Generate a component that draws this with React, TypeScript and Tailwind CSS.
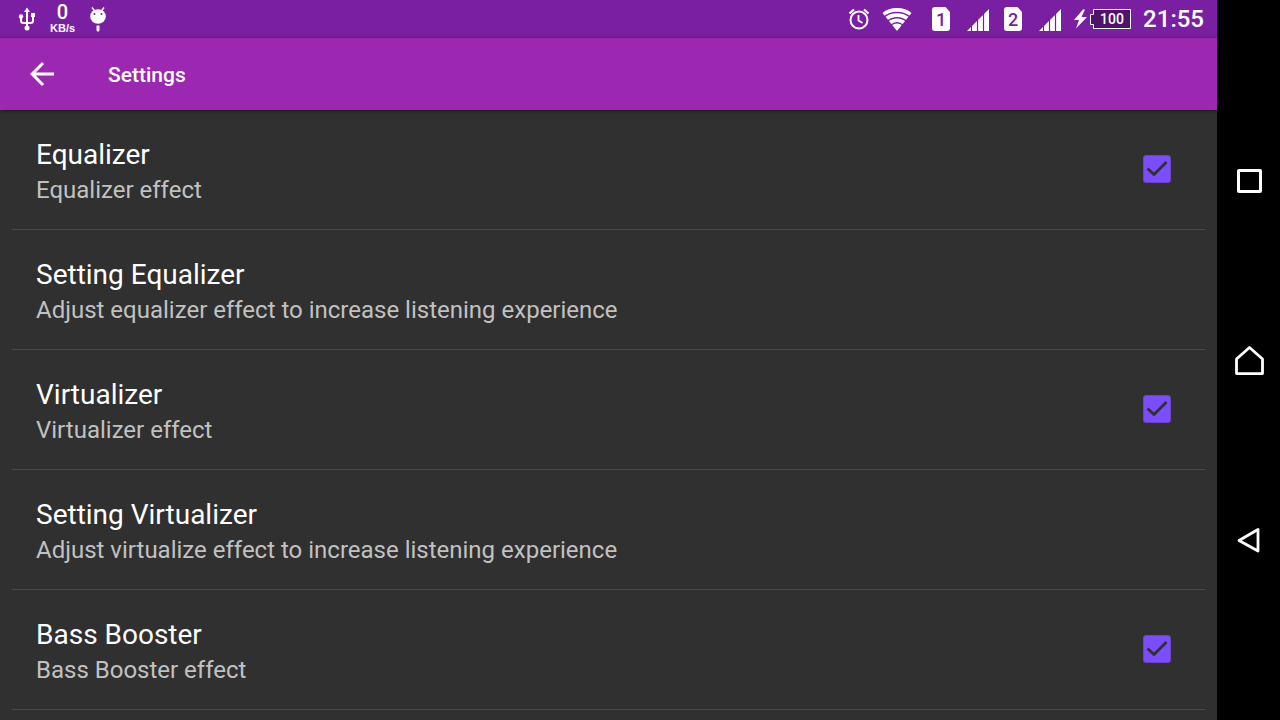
import { useState } from 'react';

interface Preference { id: string; title: string; summary: string; toggle?: boolean; }

const PREFERENCES: Preference[] = [
  { id: 'equalizer', title: 'Equalizer', summary: 'Equalizer effect', toggle: true },
  { id: 'setting-equalizer', title: 'Setting Equalizer', summary: 'Adjust equalizer effect to increase listening experience' },
  { id: 'virtualizer', title: 'Virtualizer', summary: 'Virtualizer effect', toggle: true },
  { id: 'setting-virtualizer', title: 'Setting Virtualizer', summary: 'Adjust virtualize effect to increase listening experience' },
  { id: 'bass-booster', title: 'Bass Booster', summary: 'Bass Booster effect', toggle: true },
];

function UsbIcon() {
  return (
    <svg width="18" height="24" viewBox="0 0 18 24" fill="none" stroke="white" strokeWidth="2">
      <path d="M9 4v17M3 10v3.500c0 1.500 1 2.500 2.500 2.500H12.500c1.500 0 2.500-1 2.500-2.500V9" />
      <path d="M9 0.500l3 4.500H6zM13 6h4v4h-4z" fill="white" stroke="none" />
      <circle cx="3" cy="9.500" r="2.200" fill="white" stroke="none" />
      <circle cx="9" cy="21" r="2.500" fill="white" stroke="none" />
    </svg>
  );
}

function AndroidHeadIcon() {
  return (
    <svg width="18" height="26" viewBox="0 0 18 26">
      <path d="M3 1.500l3 4M15 1.500l-3 4" stroke="white" strokeWidth="1.500" />
      <ellipse cx="9" cy="10.500" rx="7.800" ry="7.300" fill="white" />
      <path d="M7.500 19.500h3V24a1.500 1.500 0 0 1-3 0z" fill="white" />
      <circle cx="5.500" cy="8" r="1" fill="#7b1fa2" />
      <circle cx="12.500" cy="8" r="1" fill="#7b1fa2" />
    </svg>
  );
}

function AlarmIcon() {
  return (
    <svg width="22" height="22" viewBox="0 0 22 22" fill="none" stroke="white" strokeWidth="2">
      <circle cx="11" cy="12" r="8.500" />
      <path d="M10.500 7v5.500l4 2.500" strokeWidth="1.800" />
      <path d="M1.500 5.500l4.500-4M20.500 5.500l-4.500-4" strokeWidth="2.200" />
    </svg>
  );
}

function WifiIcon() {
  return (
    <svg width="30" height="24" viewBox="0 0 30 24">
      <path d="M15 24L0.500 6C4 2.500 9 1 15 1s11 1.500 14.500 5z" fill="white" />
      <path d="M2 10C9 4 21 4 28 10M5 14.500c6-5 14-5 20 0M8.500 18.500c4-3.300 9-3.300 13 0" fill="none" stroke="#7b1fa2" strokeWidth="1.500" />
    </svg>
  );
}

function SimIcon({ slot }: { slot: number }) {
  return (
    <svg width="18" height="24" viewBox="0 0 18 24">
      <path d="M3 0h10.500L18 5v16a3 3 0 0 1-3 3H3a3 3 0 0 1-3-3V3a3 3 0 0 1 3-3z" fill="white" />
      <text x="9" y="19" textAnchor="middle" fill="#7b1fa2" className="font-['Roboto',sans-serif] text-[18px] font-medium">{slot}</text>
    </svg>
  );
}

function SignalIcon() {
  return (
    <svg width="22" height="24" viewBox="0 0 22 24">
      <path d="M0 24L22 2v22z" fill="white" />
      <path d="M4.500 2v22M10.500 2v22M16.500 2v22" stroke="#7b1fa2" strokeWidth="1.200" />
    </svg>
  );
}

function BatteryIcon() {
  return (
    <svg width="57" height="22" viewBox="0 0 57 22">
      <path d="M9 1.500L0 12h5L2 20.500 13 9H7.500L11 1.500z" fill="white" />
      <path d="M19.500 1.500h37v19h-37V16.500h-3v-10h3z" fill="#4f1469" stroke="white" />
      <text x="38" y="16" textAnchor="middle" fill="white" className="font-['Roboto',sans-serif] text-[14px] font-medium">100</text>
    </svg>
  );
}

function StatusBar() {
  return (
    <div className="flex h-[38px] items-center justify-between bg-[#7b1fa2] pl-[18px] pr-3 text-white">
      <div className="flex items-center gap-[14px]">
        <UsbIcon />
        <div className="flex flex-col items-center pb-0.5">
          <span className="text-[20px] font-medium leading-5">0</span>
          <span className="font-['Liberation_Sans',sans-serif] text-[11px] font-bold leading-3">KB/s</span>
        </div>
        <AndroidHeadIcon />
      </div>
      <div className="flex items-center">
        <div className="flex items-center gap-3"><AlarmIcon /><WifiIcon /></div>
        <div className="ml-5 flex items-center gap-[17px]"><SimIcon slot={1} /><SignalIcon /></div>
        <div className="ml-[15px] flex items-center gap-[17px]"><SimIcon slot={2} /><SignalIcon /></div>
        <div className="ml-[13px] flex items-center gap-3">
          <BatteryIcon />
          <span className="pr-px text-2xl font-medium leading-[38px]">21:55</span>
        </div>
      </div>
    </div>
  );
}

function Toolbar() {
  return (
    <header className="z-10 flex h-[72px] items-center gap-12 bg-[#9c27b0] pl-6 text-white shadow-[0_1px_4px_rgba(0,0,0,0.5)]">
      <button type="button" aria-label="Back" className="grid size-9 place-items-center">
        <svg width="36" height="36" viewBox="0 0 24 24" fill="white">
          <path d="M20 11H7.830l5.590-5.590L12 4l-8 8 8 8 1.410-1.410L7.830 13H20v-2z" />
        </svg>
      </button>
      <h1 className="pt-1 text-[21px] font-medium">Settings</h1>
    </header>
  );
}

function PreferenceText({ title, summary }: { title: string; summary: string }) {
  return (
    <span className="flex flex-col pt-1.5">
      <span className="text-[28px] leading-9 text-white">{title}</span>
      <span className="text-2xl leading-[34px] text-[#c1c1c1]">{summary}</span>
    </span>
  );
}

function PreferenceRow({ pref }: { pref: Preference }) {
  const [checked, setChecked] = useState(true);

  return (
    <li className="h-[120px] border-b border-[#4a4a4a]">
      {pref.toggle ? (
        <label htmlFor={pref.id} className="flex h-full cursor-pointer items-center justify-between pb-px pl-6 pr-[34px]">
          <PreferenceText title={pref.title} summary={pref.summary} />
          <span className="grid size-7">
            <input id={pref.id} type="checkbox" checked={checked} onChange={() => setChecked(!checked)}
              className="col-start-1 row-start-1 size-7 appearance-none rounded-[3px] border border-[#c1c1c1] checked:border-[#6847c4] checked:bg-[#7c4dff]" />
            {checked && (
              <svg className="pointer-events-none col-start-1 row-start-1" width="28" height="28" viewBox="0 0 28 28" fill="none" stroke="#303030" strokeWidth="2.800">
                <path d="M4.500 13.500l6.500 6L23.500 7" />
              </svg>
            )}
          </span>
        </label>
      ) : (
        <button type="button" className="flex h-full w-full items-center pb-px pl-6 text-left">
          <PreferenceText title={pref.title} summary={pref.summary} />
        </button>
      )}
    </li>
  );
}

function NavigationBar() {
  return (
    <nav className="sticky top-0 flex h-screen w-[63px] shrink-0 flex-col items-center justify-center gap-[150px] bg-black">
      <button type="button" aria-label="Recent apps" className="size-[30px]">
        <svg width="30" height="30" viewBox="0 0 30 30" fill="none" stroke="white" strokeWidth="3">
          <rect x="4.500" y="5.500" width="22" height="21" rx="0.500" />
        </svg>
      </button>
      <button type="button" aria-label="Home" className="size-[30px]">
        <svg width="30" height="30" viewBox="0 0 30 30" fill="none" stroke="white" strokeWidth="2.800" strokeLinejoin="round">
          <path d="M2.500 14L15.500 2.500 28.500 14v14.600h-26z" />
        </svg>
      </button>
      <button type="button" aria-label="Back" className="size-[30px]">
        <svg width="30" height="30" viewBox="0 0 30 30" fill="none" stroke="white" strokeWidth="2.800" strokeLinejoin="round">
          <path d="M5 15.500L24 4.500v21.500z" />
        </svg>
      </button>
    </nav>
  );
}

export default function App() {
  return (
    <div className="flex min-h-screen bg-[#303030] font-['Roboto',sans-serif]">
      <div className="flex min-w-0 flex-1 flex-col">
        <StatusBar />
        <Toolbar />
        <main className="flex-1 px-3">
          <ul>
            {PREFERENCES.map((pref) => <PreferenceRow key={pref.id} pref={pref} />)}
          </ul>
        </main>
      </div>
      <NavigationBar />
    </div>
  );
}
